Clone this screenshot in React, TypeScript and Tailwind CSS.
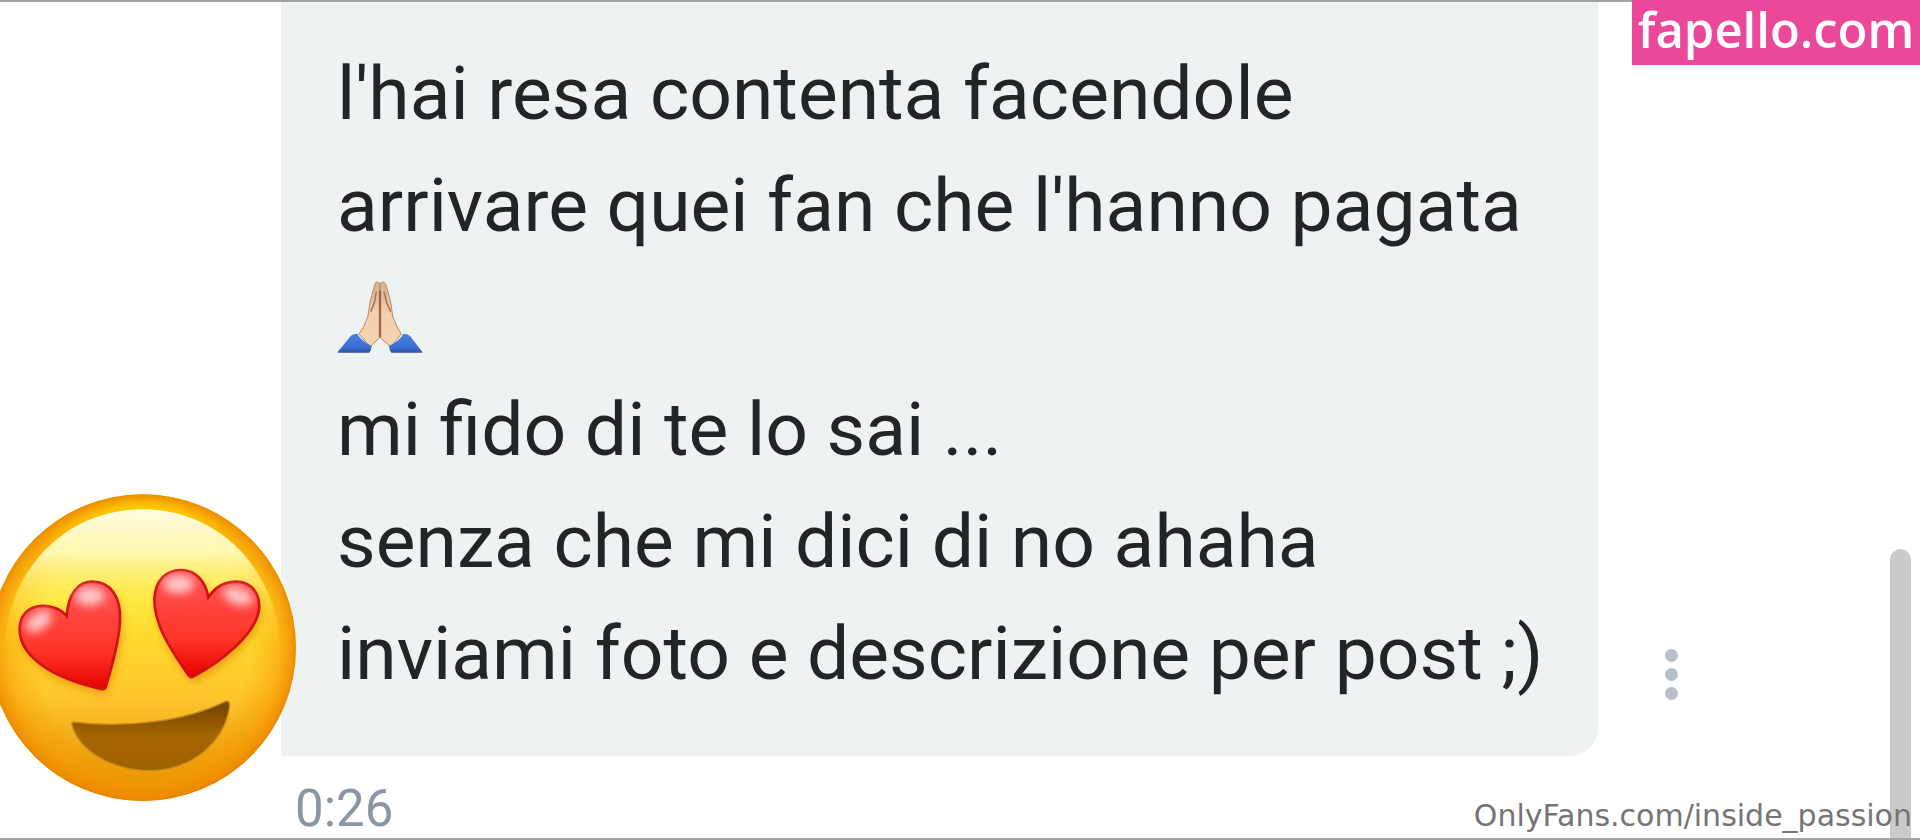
const lines = [
  "l'hai resa contenta facendole",
  "arrivare quei fan che l'hanno pagata",
  "pray",
  "mi fido di te lo sai ...",
  "senza che mi dici di no ahaha",
  "inviami foto e descrizione per post ;)",
];

const leftHeart =
  "M316 624 Q308 631 296 625 C240 612 150 585 98 532 C44 480 46 398 105 381 C145 371 182 386 200 408 C205 340 235 305 277 305 C332 305 364 352 360 425 C356 490 336 560 316 624Z";
const rightHeart =
  "M582 588 Q572 597 564 584 C525 525 463 445 463 358 C465 300 500 269 545 270 C590 271 618 308 625 352 C645 322 675 305 710 305 C758 307 781 345 777 388 C768 465 655 550 582 588Z";

function HeartEyes() {
  return (
    <svg viewBox="-36 36 936 936" className="-ml-3 size-[312px] shrink-0" role="img" aria-label="Heart eyes">
      <defs>
        <linearGradient id="face" x1="0" y1="0" x2="0" y2="1">
          <stop offset="0" stopColor="#ffcd05" />
          <stop offset="0.35" stopColor="#ffe32c" />
          <stop offset="0.65" stopColor="#ffc82e" />
          <stop offset="1" stopColor="#e08a00" />
        </linearGradient>
        <radialGradient id="rim">
          <stop offset="0.7" stopColor="#f79a00" stopOpacity="0" />
          <stop offset="0.88" stopColor="#f79a00" stopOpacity="0.5" />
          <stop offset="0.97" stopColor="#f08c00" stopOpacity="0.8" />
          <stop offset="1" stopColor="#e88400" stopOpacity="0.9" />
        </radialGradient>
        <linearGradient id="top" x1="0" y1="0" x2="0" y2="1">
          <stop offset="0" stopColor="#ffd800" />
          <stop offset="0.2" stopColor="#ffd000" stopOpacity="0" />
        </linearGradient>
        <linearGradient id="shine" x1="0" y1="0" x2="0" y2="1">
          <stop offset="0" stopColor="#fffce0" />
          <stop offset="0.3" stopColor="#fffab8" stopOpacity="0.95" />
          <stop offset="0.6" stopColor="#fff36a" stopOpacity="0.5" />
          <stop offset="0.95" stopColor="#ffe030" stopOpacity="0" />
        </linearGradient>
        <linearGradient id="heart" x1="0" y1="0" x2="0" y2="1">
          <stop offset="0.1" stopColor="#ff5050" />
          <stop offset="0.65" stopColor="#ff3426" />
          <stop offset="1" stopColor="#e60000" />
        </linearGradient>
        <linearGradient id="mouth" x1="0" y1="0" x2="0" y2="1">
          <stop offset="0.1" stopColor="#7a4700" />
          <stop offset="0.5" stopColor="#a66700" />
          <stop offset="1" stopColor="#9f6100" />
        </linearGradient>
        <filter id="soft" x="-50%" y="-50%" width="200%" height="200%">
          <feGaussianBlur stdDeviation="14" />
        </filter>
      </defs>
      <circle cx="428" cy="503" r="460" fill="url(#face)" />
      <circle cx="428" cy="503" r="460" fill="url(#rim)" />
      <ellipse cx="428" cy="490" rx="400" ry="425" fill="url(#top)" filter="url(#soft)" opacity="0.8" />
      <path d="M14 520 C14 280 190 88 428 88 C664 88 840 280 840 520Z" fill="url(#shine)" />
      <g fill="#e07800" opacity="0.6" filter="url(#soft)" transform="translate(6 16)">
        <path d={leftHeart} />
        <path d={rightHeart} />
      </g>
      <g fill="url(#heart)" stroke="#d01212" strokeWidth="8">
        <path d={leftHeart} />
        <path d={rightHeart} />
      </g>
      <g fill="#ffdfe2" opacity="0.85" filter="url(#soft)">
        <ellipse cx="270" cy="348" rx="44" ry="28" />
        <ellipse cx="116" cy="424" rx="44" ry="26" transform="rotate(-35 116 424)" />
        <ellipse cx="536" cy="312" rx="46" ry="28" />
        <ellipse cx="714" cy="348" rx="46" ry="26" transform="rotate(20 714 348)" />
      </g>
      <path
        d="M218 726 C375 745 555 725 676 664 Q690 660 689 680 C672 790 572 872 447 872 C325 870 235 805 217 738 Q214 727 218 726Z"
        fill="url(#mouth)"
        stroke="#c98c18"
        strokeWidth="4"
      />
    </svg>
  );
}

function PrayingHands() {
  return (
    <svg viewBox="51 35 258 222" className="h-[74px] w-[86px]" role="img" aria-label="Folded hands">
      <defs>
        <linearGradient id="skin" x1="0" y1="0" x2="0" y2="1">
          <stop offset="0" stopColor="#d9b08d" />
          <stop offset="0.5" stopColor="#f3d0b0" />
          <stop offset="1" stopColor="#f7d3b0" />
        </linearGradient>
        <linearGradient id="sleeve" x1="0" y1="0" x2="0" y2="1">
          <stop offset="0" stopColor="#4683e4" />
          <stop offset="0.75" stopColor="#3c6dd2" />
          <stop offset="1" stopColor="#2a4f9c" />
        </linearGradient>
      </defs>
      <g fill="url(#skin)" stroke="#b98a68" strokeWidth="3">
        <path d="M180 46 Q168 34 164 50 L150 101 L144 143 Q134 176 117 197 L150 236 L180 207Z" />
        <path d="M180 46 Q192 34 198 50 L212 101 L218 143 Q228 176 244 197 L212 236 L180 207Z" />
      </g>
      <path d="M180 66V206" stroke="#9c6847" strokeWidth="7" />
      <path d="M169 70 L163 103 L152 130 M192 70 L200 103 L212 130" fill="none" stroke="#a97a58" strokeWidth="5" />
      <g fill="url(#sleeve)">
        <path d="M53 251 L92 203 Q97 197 112 196 Q121 216 155 233 Q154 246 148 253 L58 253Q50 253 53 251Z" />
        <path d="M307 251 L270 203 Q265 197 250 196 Q241 216 207 233 Q208 246 214 253 L303 253Q311 253 307 251Z" />
      </g>
    </svg>
  );
}

export default function App() {
  return (
    <div className="relative font-['Roboto',sans-serif]">
      <div className="flex min-h-screen w-full overflow-hidden border-y-2 border-[#a3a3a3] bg-white">
        <div className="relative z-10 flex w-[281px] shrink-0 items-end pb-[34px]">
          <HeartEyes />
        </div>

        <main className="flex min-w-0 grow flex-col">
          <div className="flex items-end">
            <div className="w-[1317px] rounded-br-[28px] bg-[#eef2f3] px-14 pt-[35px] pb-[47px] text-[75px] leading-[112px] whitespace-nowrap text-[#212528]">
              {lines.map((line) =>
                line === "pray" ? (
                  <div key={line} className="flex h-[112px] items-center">
                    <PrayingHands />
                  </div>
                ) : (
                  <p key={line}>{line}</p>
                )
              )}
            </div>
            <button type="button" aria-label="Message options" className="mb-14 ml-[67px] flex flex-col gap-[6px]">
              <span className="size-[13px] rounded-full bg-[#b9bec8]" />
              <span className="size-[13px] rounded-full bg-[#b5bfc7]" />
              <span className="size-[13px] rounded-full bg-[#b9bec8]" />
            </button>
          </div>
          <time className="mt-6 ml-[14px] text-[51px] leading-[58px] text-[#8a96a3]">0:26</time>
        </main>

        <div className="mt-[547px] mr-[9px] w-[21px] shrink-0 rounded-t-full bg-[#cbcbcb]" />
      </div>

      <a
        href="#"
        className="absolute top-0 right-0 h-[65px] w-72 bg-[#ec4899] text-center font-['Open_Sans',sans-serif] text-[49px] leading-[58px] font-semibold text-white"
      >
        fapello.com
      </a>
      <a
        href="#"
        className="absolute right-2 bottom-1.5 font-['DejaVu_Sans',sans-serif] text-[30px] leading-9 text-[#757575]"
      >
        OnlyFans.com/inside_passion
      </a>
    </div>
  );
}
